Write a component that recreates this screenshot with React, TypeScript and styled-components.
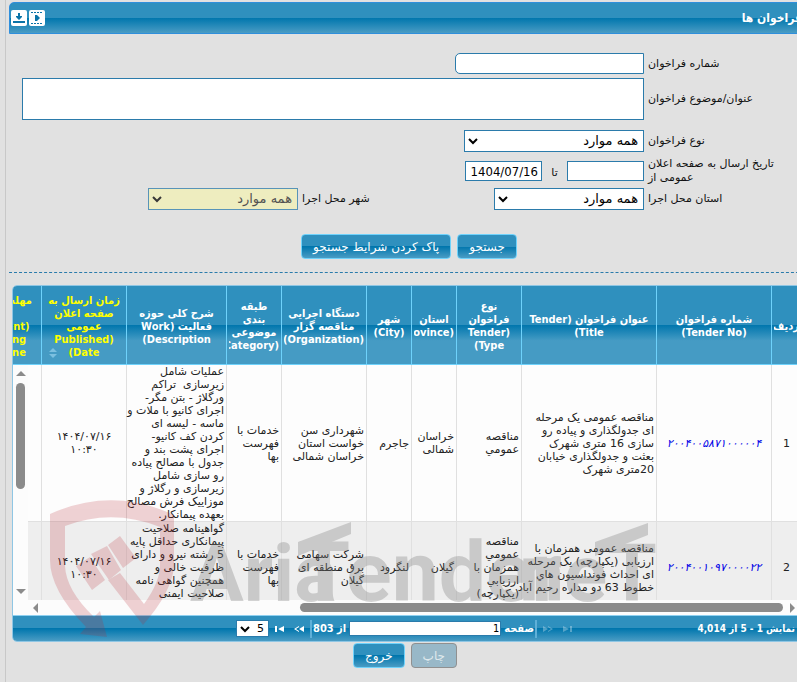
import React from "react";
import styled, { createGlobalStyle, css } from "styled-components";

const wide = `"DejaVu Sans", sans-serif`;
const narrow = `"DejaVu Sans Condensed", "DejaVu Sans", sans-serif`;

const Global = createGlobalStyle`
  * { box-sizing: border-box; }
  body {
    margin: 0;
    background: #e1e1e1;
    color: #222;
    font: 11px/13px ${wide};
  }
`;

const glossy = css`
  background: linear-gradient(#2f90be 0 50%, #0076ad 50%, #4a9cc4 100%);
`;

const Viewport = styled.div`
  overflow: hidden;
  padding-left: 5px;
`;

const Page = styled.main`
  direction: rtl;
  position: relative;
  width: calc(100% + 12px);
  border-left: 1px solid #c8c8c8;
  padding: 2px 0 15px 3px;
`;

const TitleBar = styled.header`
  ${glossy}
  display: flex;
  align-items: center;
  justify-content: space-between;
  height: 32px;
  padding: 0 6px 0 1px;
  border: 1px solid #2f8fdc;
  border-top-left-radius: 5px;
  color: #fff;
`;

const Title = styled.h1`
  margin: 0;
  font: bold 12px/16px ${narrow};
`;

const Tools = styled.div`
  display: flex;
  gap: 2px;
`;

const ToolButton = styled.button`
  width: 16px;
  height: 16px;
  padding: 0;
  border: 0;
  border-radius: 2px;
  background: #fff;
  svg { display: block; }
`;

const Form = styled.form`
  padding-top: 19px;
  color: #111;
`;

const Row = styled.div<{ $height: number }>`
  display: grid;
  grid-template-columns: 165px 1fr;
  align-items: center;
  min-height: ${(p) => p.$height}px;
`;

const Fields = styled.div`
  display: flex;
  align-items: center;
  padding-left: 13px;
`;

const Label = styled.label<{ $width?: number }>`
  width: ${(p) => (p.$width ? p.$width + "px" : "auto")};
  padding: 0 20px 0 4px;
  text-align: left;
  line-height: 14px;
`;

const field = css`
  border: 1px solid #2b7bab;
  background: #fff;
  color: #000;
  margin: 0;
  font: 13px/18px ${narrow};
`;

const TextInput = styled.input<{ $width: number; $height: number; $round?: boolean }>`
  ${field}
  width: ${(p) => p.$width}px;
  height: ${(p) => p.$height}px;
  padding: 0 3px;
  border-radius: ${(p) => (p.$round ? "5px 0 0 5px" : "0")};
`;

const TextArea = styled.textarea`
  ${field}
  display: block;
  width: 100%;
  height: 42px;
  resize: none;
`;

const arrow = `url("data:image/svg+xml,%3Csvg xmlns='http://www.w3.org/2000/svg' width='10' height='7'%3E%3Cpath d='M1 1l4 4 4-4' fill='none' stroke='%23000' stroke-width='2'/%3E%3C/svg%3E")`;

const Select = styled.select<{ $width: number }>`
  ${field}
  appearance: none;
  width: ${(p) => p.$width}px;
  height: 22px;
  padding: 0 5px 0 18px;
  border-radius: 0;
  background: #fff ${arrow} no-repeat 3px 7px;
  font-family: ${wide};
  &:disabled {
    background-color: #f3f1b4;
    opacity: 0.75;
    color: #222;
  }
`;

const Between = styled.span`
  width: 25px;
  padding-top: 3px;
  text-align: center;
`;

const Actions = styled.div<{ $top: number; $shift?: number }>`
  display: flex;
  justify-content: center;
  gap: 6px;
  padding: ${(p) => p.$top}px ${(p) => p.$shift || 0}px 0 0;
`;

const Button = styled.button`
  ${glossy}
  height: 25px;
  padding: 0 11px;
  border: 1px solid #6fd2fb;
  border-radius: 4px;
  color: #fff;
  font: 12px/20px ${wide};
  &:disabled {
    border-color: #909090;
    background: #98b8c8;
    color: #dfe8ec;
  }
`;

const Divider = styled.hr`
  margin: 13px 0 12px;
  border: 0;
  border-top: 1px dashed #2b7bab;
`;

const Grid = styled.section`
  position: relative;
  margin: 0 7px 0 3px;
  border: 1px solid #8fc6e4;
  border-radius: 5px;
  background: #fdfdfd;
  overflow: hidden;
`;

const Body = styled.div`
  position: relative;
  height: 314px;
  overflow: hidden;
`;

const Table = styled.table`
  width: 845px;
  table-layout: fixed;
  border-collapse: separate;
  border-spacing: 0;
`;

const Th = styled.th<{ $hot?: boolean }>`
  position: relative;
  height: 79px;
  padding: 2px 2px 0;
  border-left: 1px solid #6fd2fb;
  border-bottom: 1px solid #6fd2fb;
  background: linear-gradient(#2f90be 0 50%, #0076ad 50%, #459bc4 70%);
  color: ${(p) => (p.$hot ? "#ff0" : "#fff")};
  font-family: ${narrow};
`;

const HeadText = styled.div`
  overflow: hidden;
  text-align: center;
  white-space: nowrap;
`;

const Sort = styled.svg`
  position: absolute;
  left: 7px;
  bottom: 6px;
`;

const Tr = styled.tr<{ $alt?: boolean; $height: number }>`
  height: ${(p) => p.$height}px;
  background: ${(p) => (p.$alt ? "#eee" : "#fdfdfd")};
`;

const Td = styled.td<{ $center?: boolean; $top?: boolean }>`
  padding: 0 2px;
  border-left: 1px solid #e0e0e0;
  border-bottom: 1px solid #e0e0e0;
  text-align: ${(p) => (p.$center ? "center" : "right")};
  vertical-align: ${(p) => (p.$top ? "top" : "middle")};
  white-space: pre;
`;

const TenderLink = styled.a`
  color: #0000e6;
  font-style: italic;
  text-decoration: none;
`;

const VScroll = styled.div`
  position: absolute;
  left: 0;
  top: 79px;
  bottom: 0;
  width: 15px;
  display: flex;
  flex-direction: column;
  align-items: center;
  background: #fcfcfc;
  padding: 6px 0;
`;

const HScroll = styled.div`
  display: flex;
  align-items: center;
  height: 15px;
  padding: 0 6px 0 20px;
  background: #fcfcfc;
  direction: ltr;
`;

const Thumb = styled.div<{ $vertical?: boolean }>`
  border-radius: 5px;
  background: #8b8b8b;
  ${(p) =>
    p.$vertical
      ? "width: 9px; height: 106px; margin: 7px 0 auto;"
      : "position: relative; z-index: 2; height: 9px; width: 483px; margin: 0 7px 0 auto;"}
`;

const Pager = styled.footer`
  ${glossy}
  display: flex;
  align-items: center;
  height: 26px;
  border-top: 1px solid #8fd0f0;
  color: #fff;
  padding-right: 6px;
`;

const PagerText = styled.span<{ $small?: boolean }>`
  font: bold ${(p) => (p.$small ? 10 : 11)}px/13px ${narrow};
  white-space: nowrap;
`;

const PagerControls = styled.div`
  display: flex;
  align-items: center;
  margin-right: auto;
  padding-left: 223px;
`;

const Separator = styled.i`
  width: 2px;
  height: 18px;
  margin: 0 1px;
  background: #5fb0d8;
`;

const NavButton = styled.button`
  display: flex;
  width: 20px;
  padding: 0;
  border: 0;
  background: none;
  color: #fff;
  justify-content: center;
  &:disabled { opacity: 0.3; }
`;

const PageInput = styled.input`
  ${field}
  width: 152px;
  height: 15px;
  margin: 0 3px;
  padding: 0 1px;
  font-size: 11px;
`;

const SizeSelect = styled(Select)`
  height: 17px;
  padding: 0 4px 0 14px;
  font-size: 11px;
  line-height: 15px;
  background-position: 3px 5px;
`;

const Watermark = styled.svg`
  position: absolute;
  z-index: 1;
  left: 34px;
  top: 490px;
  direction: ltr;
  pointer-events: none;
  font: bold 84px "Roboto", sans-serif;
`;

const widths = [30, 115, 135, 65, 45, 45, 85, 55, 100, 85, 85];

const heads: string[][] = [
  ["ردیف"],
  ["شماره فراخوان", "(Tender No)"],
  ["عنوان فراخوان (Tender", "Title)"],
  ["نوع", "فراخوان", "(Tender", "Type)"],
  ["استان", "(Province)"],
  ["شهر", "(City)"],
  ["دستگاه اجرایی", "مناقصه گزار", "(Organization)"],
  ["طبقه", "بندی", "موضوعی", "(Category)"],
  ["شرح کلی حوزه", "فعالیت (Work", "Description)"],
  ["زمان ارسال به", "صفحه اعلان", "عمومی", "(Published", "Date)"],
  ["مهلت دریافت", "اسناد", "(Document", "Receiving", "Deadline)"],
];

const rows: string[][][] = [
  [
    ["1"],
    ["۲۰۰۴۰۰۵۸۷۱۰۰۰۰۰۴"],
    ["مناقصه عمومی یک مرحله", "ای جدولگذاری و پیاده رو", "سازی 16 متری شهرک", "بعثت و جدولگذاری خیابان", "20متری شهرک"],
    ["مناقصه", "عمومي"],
    ["خراسان", "شمالی"],
    ["جاجرم"],
    ["شهرداری سن", "خواست استان", "خراسان شمالی"],
    ["خدمات با", "فهرست", "بها"],
    ["عملیات شامل", "زیرسازی  تراکم", "ورگلاژ - بتن مگر-", "اجرای کانیو با ملات و", "ماسه - لیسه ای", "کردن کف کانیو-", "اجرای پشت بند و", "جدول با مصالح پیاده", "رو سازی شامل", "زیرسازی و رگلاژ و", "موزاییک فرش مصالح", "بعهده پیمانکار."],
    ["۱۴۰۴/۰۷/۱۶", "۱۰:۳۰"],
    ["۱۴۰۴/۰۷/۲۰"],
  ],
  [
    ["2"],
    ["۲۰۰۴۰۰۱۰۹۷۰۰۰۰۲۲"],
    ["مناقصه عمومی همزمان با", "ارزیابی (یکپارچه) یک مرحله", "ای احداث فونداسیون هاي", "خطوط 63 دو مداره رحیم آباد"],
    ["مناقصه", "عمومي", "همزمان با", "ارزیابي", "(یکپارچه)"],
    ["گیلان"],
    ["لنگرود"],
    ["شرکت سهامی", "برق منطقه ای", "گیلان"],
    ["خدمات با", "فهرست", "بها"],
    ["گواهینامه صلاحیت", "پیمانکاری حداقل پایه", "5 رشته نیرو و دارای", "ظرفیت خالی و", "همچنین گواهی نامه", "صلاحیت ایمنی"],
    ["۱۴۰۴/۰۷/۱۶", "۱۰:۳۰"],
    ["۱۴۰۴/۰۷/۲۲"],
  ],
];

const Lines = ({ items }: { items: string[] }) => (
  <>
    {items.map((t, i) => (
      <div key={i}>{t}</div>
    ))}
  </>
);

const Arrow = ({ d, w = 10, h = 10 }: { d: string; w?: number; h?: number }) => (
  <svg width={w} height={h} viewBox={`0 0 ${w} ${h}`}>
    <path d={d} fill="#8b8b8b" />
  </svg>
);

const Nav = ({ label, d, disabled }: { label: string; d: string; disabled?: boolean }) => (
  <NavButton type="button" aria-label={label} disabled={disabled}>
    <svg width="12" height="8" viewBox="0 0 12 8">
      <path d={d} fill="currentColor" />
    </svg>
  </NavButton>
);

export default function App() {
  return (
    <Viewport>
      <Global />
      <Page>
        <TitleBar>
          <Title>فراخوان ها</Title>
          <Tools>
            <ToolButton type="button" aria-label="راهنمای تصویری">
              <svg width="16" height="16" viewBox="0 0 16 16" fill="#0b74a8">
                <path d="M6 5h2l3 3-3 3H6z" />
                <path d="M2 2.5h12M2 13.5h12" stroke="#0b74a8" strokeDasharray="2 1" />
              </svg>
            </ToolButton>
            <ToolButton type="button" aria-label="دریافت">
              <svg width="16" height="16" viewBox="0 0 16 16" fill="#0b74a8">
                <path d="M7 3h2v3h2v1l-3 3-3-3V6h2zM2 11h12v2H2z" />
              </svg>
            </ToolButton>
          </Tools>
        </TitleBar>

        <Form onSubmit={(e) => e.preventDefault()}>
          <Row $height={21}>
            <Label htmlFor="number">شماره فراخوان</Label>
            <Fields>
              <TextInput id="number" $width={189} $height={21} $round />
            </Fields>
          </Row>
          <Row $height={50}>
            <Label htmlFor="subject">عنوان/موضوع فراخوان</Label>
            <Fields>
              <TextArea id="subject" />
            </Fields>
          </Row>
          <Row $height={33}>
            <Label htmlFor="type">نوع فراخوان</Label>
            <Fields>
              <Select id="type" $width={180}>
                <option>همه موارد</option>
              </Select>
            </Fields>
          </Row>
          <Row $height={26}>
            <Label htmlFor="from">
              تاریخ ارسال به صفحه اعلان
              <br />
              عمومی از
            </Label>
            <Fields>
              <TextInput id="from" $width={77} $height={20} />
              <Between>تا</Between>
              <TextInput aria-label="تا تاریخ" $width={77} $height={20} defaultValue="1404/07/16" />
            </Fields>
          </Row>
          <Row $height={28}>
            <Label htmlFor="province">استان محل اجرا</Label>
            <Fields>
              <Select id="province" $width={150}>
                <option>همه موارد</option>
              </Select>
              <Label htmlFor="city" $width={196}>شهر محل اجرا</Label>
              <Select id="city" $width={150} disabled>
                <option>همه موارد</option>
              </Select>
            </Fields>
          </Row>
          <Actions $top={21}>
            <Button type="submit">جستجو</Button>
            <Button type="reset">پاک کردن شرایط جستجو</Button>
          </Actions>
        </Form>

        <Divider />

        <Grid>
          <Body>
            <Table>
              <colgroup>
                {widths.map((w, i) => (
                  <col key={i} width={w} />
                ))}
              </colgroup>
              <thead>
                <tr>
                  {heads.map((h, i) => (
                    <Th key={i} $hot={i > 8}>
                      <HeadText>
                        <Lines items={h} />
                      </HeadText>
                      {i === 9 && (
                        <Sort width="8" height="10" viewBox="0 0 8 10">
                          <path d="M0 4l4-4 4 4zM0 6h8l-4 4z" fill="#7cc0e0" />
                        </Sort>
                      )}
                    </Th>
                  ))}
                </tr>
              </thead>
              <tbody>
                {rows.map((r, n) => (
                  <Tr key={n} $alt={n === 1} $height={n === 1 ? 92 : 157}>
                    {r.map((c, i) => (
                      <Td key={i} $center={[0, 1, 9, 10].includes(i)} $top={i === 8}>
                        {i === 1 ? <TenderLink href="#tender">{c[0]}</TenderLink> : <Lines items={c} />}
                      </Td>
                    ))}
                  </Tr>
                ))}
              </tbody>
            </Table>
            <VScroll>
              <Arrow d="M0 5l5-5 5 5z" h={5} />
              <Thumb $vertical />
              <Arrow d="M0 0h10l-5 5z" h={5} />
            </VScroll>
          </Body>
          <HScroll>
            <Arrow d="M5 0v10l-5-5z" w={5} />
            <Thumb />
            <Arrow d="M0 0v10l5-5z" w={5} />
          </HScroll>
          <Pager>
            <PagerText $small>نمایش 1 - 5 از 4,014</PagerText>
            <PagerControls>
              <Nav label="صفحه اول" disabled d="M1 1v6l6-3zM8 1h2v6H8z" />
              <Nav label="صفحه قبل" disabled d="M1 1v6l5-3zM6 1l5 3-5 3V6l3-2-3-2z" />
              <Separator />
              <PagerText as="label" htmlFor="page">صفحه</PagerText>
              <PageInput id="page" defaultValue="1" />
              <PagerText>از 803</PagerText>
              <Separator />
              <Nav label="صفحه بعد" d="M11 1v6L6 4zM6 1L1 4l5 3V6L3 4l3-2z" />
              <Nav label="صفحه آخر" d="M11 1v6L5 4zM2 1h2v6H2z" />
              <SizeSelect $width={33} aria-label="تعداد در صفحه">
                <option>5</option>
              </SizeSelect>
            </PagerControls>
          </Pager>
        </Grid>

        <Actions $top={1} $shift={8}>
          <Button type="button" disabled>چاپ</Button>
          <Button type="button">خروج</Button>
        </Actions>

        <Watermark width="620" height="155" viewBox="40 490 620 155" aria-hidden="true">
          <g fill="#b82832" opacity="0.2">
            <path d="M50 514Q112 486 174 515V566Q172 592 143 625L108 580L120 573L144 604Q160 582 160 565V527Q112 508 65 526V566Q66 590 94 617L100 611L107 637L80 634L86 627Q50 590 50 560Z" />
            <path d="M108 545l12-9 16 22-13 10zM91 554l16-8 14 24-12 10zM76 566l14-9 15 23-13 10z" />
          </g>
          <g fill="#808080" opacity="0.33">
            <text x="190" y="601" fontSize="80">Aria</text>
            <text x="298" y="601">Tender</text>
            <text x="496" y="601" fontSize="80">.neT</text>
            <path d="M298 542L351 522V534L298 556ZM595 542L648 523V535L595 556Z" />
          </g>
        </Watermark>
      </Page>
    </Viewport>
  );
}
